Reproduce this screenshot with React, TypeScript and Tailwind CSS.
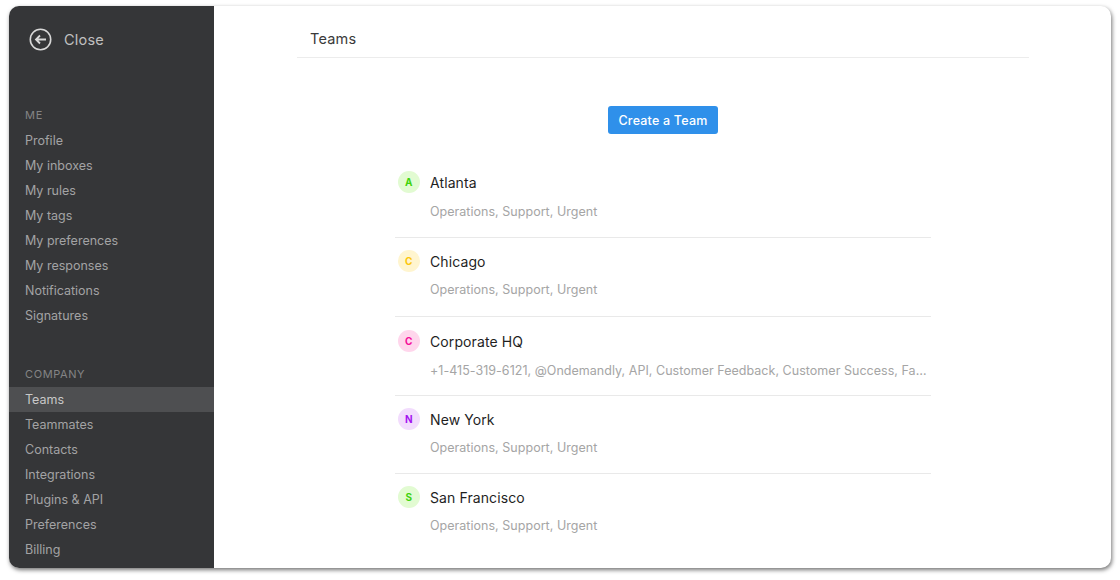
const me = ["Profile", "My inboxes", "My rules", "My tags", "My preferences", "My responses", "Notifications", "Signatures"];
const company = ["Teams", "Teammates", "Contacts", "Integrations", "Plugins & API", "Preferences", "Billing"];
const teams = [
  { l: "A", n: "Atlanta", d: "Operations, Support, Urgent", bg: "bg-[#e2fbd2]", fg: "text-[#3fd30c]", row: "h-[79px] pt-[12px]", sub: "mt-[9px]" },
  { l: "C", n: "Chicago", d: "Operations, Support, Urgent", bg: "bg-[#fff5cf]", fg: "text-[#fcc60a]", row: "h-[79px] pt-[12px]", sub: "mt-[8px]" },
  { l: "C", n: "Corporate HQ", d: "+1-415-319-6121, @Ondemandly, API, Customer Feedback, Customer Success, Fa…", bg: "bg-[#ffd6ec]", fg: "text-[#f5109a]", row: "h-[79px] pt-[13px]", sub: "mt-[9px]" },
  { l: "N", n: "New York", d: "Operations, Support, Urgent", bg: "bg-[#f2dcfd]", fg: "text-[#a414f0]", row: "h-[78px] pt-[12px]", sub: "mt-[8px]" },
  { l: "S", n: "San Francisco", d: "Operations, Support, Urgent", bg: "bg-[#e2fbd2]", fg: "text-[#3fd30c]", row: "h-[79px] pt-[12px]", sub: "mt-[8px]" },
];

function Item({ label, active }: { label: string; active?: boolean }) {
  return (
    <div className={`h-[25px] pl-4 pt-[1px] flex items-center text-[12.5px] ${active ? "bg-[#4e4f51] text-[#c8c8c8]" : "text-[#a3a3a4]"}`}>
      {label}
    </div>
  );
}

export default function App() {
  return (
    <div className="w-[1120px] h-[580px] bg-white pt-[6px] pl-[9px] overflow-hidden font-['Inter',sans-serif]">
      <div className="w-[1102px] h-[562px] rounded-[10px] overflow-hidden bg-white flex shadow-[1px_2px_4px_rgba(0,0,0,0.55)]">
        <aside className="w-[205px] shrink-0 bg-[#353638] flex flex-col">
          <div className="h-[66px] pl-[20px] flex items-center gap-[12px]">
            <svg width="23" height="23" viewBox="0 0 23 23" fill="none" stroke="#d8d8d8">
              <circle cx="11.5" cy="11.5" r="10.2" strokeWidth="1.6" />
              <path d="M17 11.5H7M11 7.5L7 11.5L11 15.5" strokeWidth="1.8" />
            </svg>
            <span className="text-[14.5px] text-[#c0c0c0] tracking-[0.2px] mt-[2px]">Close</span>
          </div>
          <div className="mt-[35px] mb-[5px] h-[16px] pl-4 flex items-center text-[11px] tracking-[0.7px] text-[#848485]">ME</div>
          {me.map((x) => <Item key={x} label={x} />)}
          <div className="mt-[38px] mb-[5px] h-[16px] pl-4 flex items-center text-[11px] tracking-[0.6px] text-[#848485]">COMPANY</div>
          {company.map((x) => <Item key={x} label={x} active={x === "Teams"} />)}
        </aside>
        <main className="flex-1 flex flex-col">
          <div className="ml-[83px] w-[732px] h-[52px] border-b border-[#ececec] pl-[13px] pt-[22px] text-[14.5px] leading-[22px] text-[#3a3a3a] tracking-[0.2px]">
            Teams
          </div>
          <div className="mt-[48px] flex justify-center pl-[1px]">
            <button className="w-[110px] h-[28px] pt-[2px] rounded-[3px] bg-[#2f90ea] text-white text-[12.5px] font-medium tracking-[0.2px]">Create a Team</button>
          </div>
          <div className="ml-[181px] w-[536px] mt-[25px]">
            {teams.map((t, i) => (
              <div key={t.n + i} className={`${t.row} ${i < 4 ? "border-b border-[#e9e9e9]" : ""}`}>
                <div className="flex items-center h-[22px] pl-[3px]">
                  <div className={`w-[21.5px] h-[21.5px] rounded-full flex items-center justify-center text-[10px] font-bold ${t.bg} ${t.fg}`}>{t.l}</div>
                  <div className="ml-[10.5px] text-[14px] text-[#1f1f1f] tracking-[0.1px]">{t.n}</div>
                </div>
                <div className={`${t.sub} ml-[35px] text-[12.5px] leading-[20px] text-[#a5a5a5] whitespace-nowrap tracking-[0.03px]`}>{t.d}</div>
              </div>
            ))}
          </div>
        </main>
      </div>
    </div>
  );
}
